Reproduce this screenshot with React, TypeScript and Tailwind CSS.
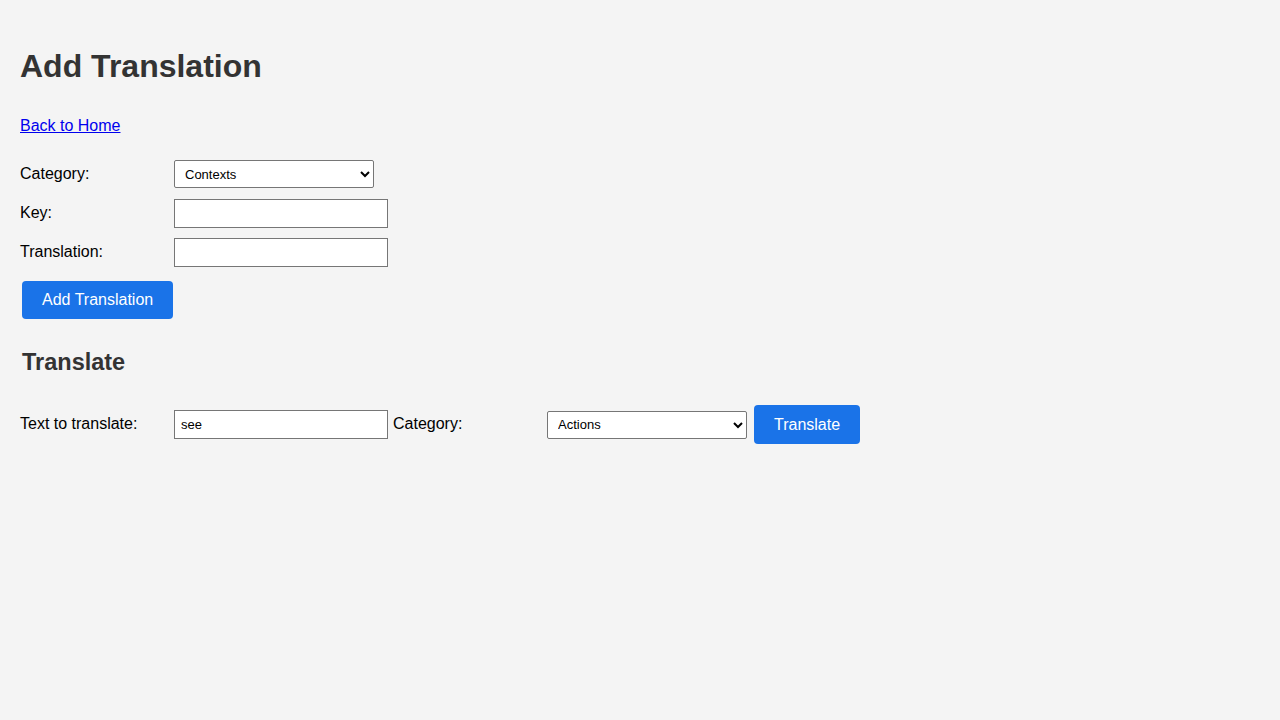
import { useState } from "react";

const labelClass = "inline-block w-[150px] shrink-0 text-[16px] text-black";
const inputClass =
  "h-[29px] w-[214px] border border-[#767676] bg-white px-[6px] text-[13px] text-black outline-none";
const selectClass =
  "h-[28px] w-[200px] border border-[#767676] bg-white px-[6px] text-[13px] text-black rounded-[2px]";
const buttonClass =
  "rounded-[4px] bg-[#1a73e8] px-[20px] py-[10px] text-[16px] leading-[18px] text-white";

export default function App() {
  const [category, setCategory] = useState("Contexts");
  const [key, setKey] = useState("");
  const [translation, setTranslation] = useState("");
  const [text, setText] = useState("see");
  const [searchCategory, setSearchCategory] = useState("Actions");

  return (
    <div className="min-h-screen bg-[#f4f4f4] p-[20px] font-['Liberation_Sans',Arial,sans-serif]">
      <h1 className="mt-[28px] mb-[32px] text-[32px] font-bold leading-[37px] text-[#333]">
        Add Translation
      </h1>
      <p className="my-[16px] text-[16px] leading-[18px]">
        <a href="#" className="text-[#0000ee] underline">
          Back to Home
        </a>
      </p>

      <form className="mt-[25px]" onSubmit={(e) => e.preventDefault()}>
        <div className="mb-[10px] flex h-[28px] items-center">
          <label className={labelClass}>Category:</label>
          <select
            className={`ml-[4px] ${selectClass}`}
            value={category}
            onChange={(e) => setCategory(e.target.value)}
          >
            <option>Contexts</option>
            <option>Actions</option>
            <option>Objects</option>
          </select>
        </div>
        <div className="mb-[10px] mt-[11px] flex h-[29px] items-center">
          <label className={`${labelClass} -mt-[2px]`}>Key:</label>
          <input
            className={`ml-[4px] ${inputClass}`}
            value={key}
            onChange={(e) => setKey(e.target.value)}
          />
        </div>
        <div className="flex h-[29px] items-center">
          <label className={`${labelClass} -mt-[2px]`}>Translation:</label>
          <input
            className={`ml-[4px] ${inputClass}`}
            value={translation}
            onChange={(e) => setTranslation(e.target.value)}
          />
        </div>
        <button type="submit" className={`ml-[2px] mt-[14px] ${buttonClass}`}>
          Add Translation
        </button>
      </form>

      <h2 className="ml-[2px] mt-[29px] text-[23.5px] font-bold leading-[28px] text-[#333]">
        Translate
      </h2>

      <div className="mt-[29px] flex items-center">
        <label className={`${labelClass} -mt-[2px]`}>Text to translate:</label>
        <input
          className={`ml-[4px] ${inputClass}`}
          value={text}
          onChange={(e) => setText(e.target.value)}
        />
        <label className={`ml-[5px] ${labelClass} -mt-[2px]`}>Category:</label>
        <select
          className={`ml-[4px] ${selectClass}`}
          value={searchCategory}
          onChange={(e) => setSearchCategory(e.target.value)}
        >
          <option>Actions</option>
          <option>Contexts</option>
          <option>Objects</option>
        </select>
        <button type="button" className={`ml-[7px] ${buttonClass} py-[9px] leading-[19px]`}>
          Translate
        </button>
      </div>
    </div>
  );
}
